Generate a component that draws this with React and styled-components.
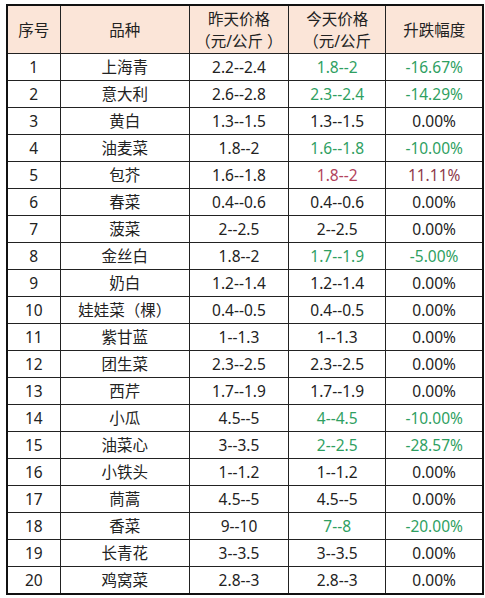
import React from "react";
import styled, { createGlobalStyle } from "styled-components";

const GlobalStyle = createGlobalStyle`
  html, body {
    margin: 0;
    padding: 0;
    background: #ffffff;
  }
  body {
    font-family: "Noto Sans", "Noto Sans CJK SC", sans-serif;
  }
`;

const Page = styled.div`
  padding: 4px 0 0 6px;
`;

const Table = styled.table`
  width: 478px;
  border-collapse: collapse;
  table-layout: fixed;
  border: 2.5px solid #111;
  font-size: 15.5px;
  color: #222;
`;

const HeadCell = styled.th`
  background: #fbe5d8;
  font-weight: 400;
  height: 47px;
  padding: 0;
  line-height: 22px;
  text-align: center;
  border: 1px solid #222;
  vertical-align: middle;
`;

const Cell = styled.td`
  height: 26px;
  padding: 0;
  text-align: center;
  border: 1px solid #222;
  line-height: 26px;
  color: ${(p) =>
    p.$tone === "down" ? "#2f9f62" : p.$tone === "up" ? "#b2435c" : p.$tone === "upPct" ? "#8e3a4c" : "#222"};
`;

const rows = [
  ["上海青", "2.2--2.4", "1.8--2", "-16.67%", "down"],
  ["意大利", "2.6--2.8", "2.3--2.4", "-14.29%", "down"],
  ["黄白", "1.3--1.5", "1.3--1.5", "0.00%"],
  ["油麦菜", "1.8--2", "1.6--1.8", "-10.00%", "down"],
  ["包芥", "1.6--1.8", "1.8--2", "11.11%", "up"],
  ["春菜", "0.4--0.6", "0.4--0.6", "0.00%"],
  ["菠菜", "2--2.5", "2--2.5", "0.00%"],
  ["金丝白", "1.8--2", "1.7--1.9", "-5.00%", "down"],
  ["奶白", "1.2--1.4", "1.2--1.4", "0.00%"],
  ["娃娃菜（棵）", "0.4--0.5", "0.4--0.5", "0.00%"],
  ["紫甘蓝", "1--1.3", "1--1.3", "0.00%"],
  ["团生菜", "2.3--2.5", "2.3--2.5", "0.00%"],
  ["西芹", "1.7--1.9", "1.7--1.9", "0.00%"],
  ["小瓜", "4.5--5", "4--4.5", "-10.00%", "down"],
  ["油菜心", "3--3.5", "2--2.5", "-28.57%", "down"],
  ["小铁头", "1--1.2", "1--1.2", "0.00%"],
  ["茼蒿", "4.5--5", "4.5--5", "0.00%"],
  ["香菜", "9--10", "7--8", "-20.00%", "down"],
  ["长青花", "3--3.5", "3--3.5", "0.00%"],
  ["鸡窝菜", "2.8--3", "2.8--3", "0.00%"],
];

export default function App() {
  return (
    <Page>
      <GlobalStyle />
      <Table>
        <colgroup>
          <col style={{ width: 53 }} />
          <col style={{ width: 129 }} />
          <col style={{ width: 99 }} />
          <col style={{ width: 97 }} />
          <col style={{ width: 97 }} />
        </colgroup>
        <thead>
          <tr>
            <HeadCell>序号</HeadCell>
            <HeadCell>品种</HeadCell>
            <HeadCell>
              昨天价格
              <br />
              （元/公斤 ）
            </HeadCell>
            <HeadCell>
              今天价格
              <br />
              （元/公斤
            </HeadCell>
            <HeadCell>升跌幅度</HeadCell>
          </tr>
        </thead>
        <tbody>
          {rows.map(([name, yesterday, today, pct, tone], i) => (
            <tr key={name}>
              <Cell>{i + 1}</Cell>
              <Cell>{name}</Cell>
              <Cell>{yesterday}</Cell>
              <Cell $tone={tone}>{today}</Cell>
              <Cell $tone={tone === "up" ? "upPct" : tone}>{pct}</Cell>
            </tr>
          ))}
        </tbody>
      </Table>
    </Page>
  );
}
